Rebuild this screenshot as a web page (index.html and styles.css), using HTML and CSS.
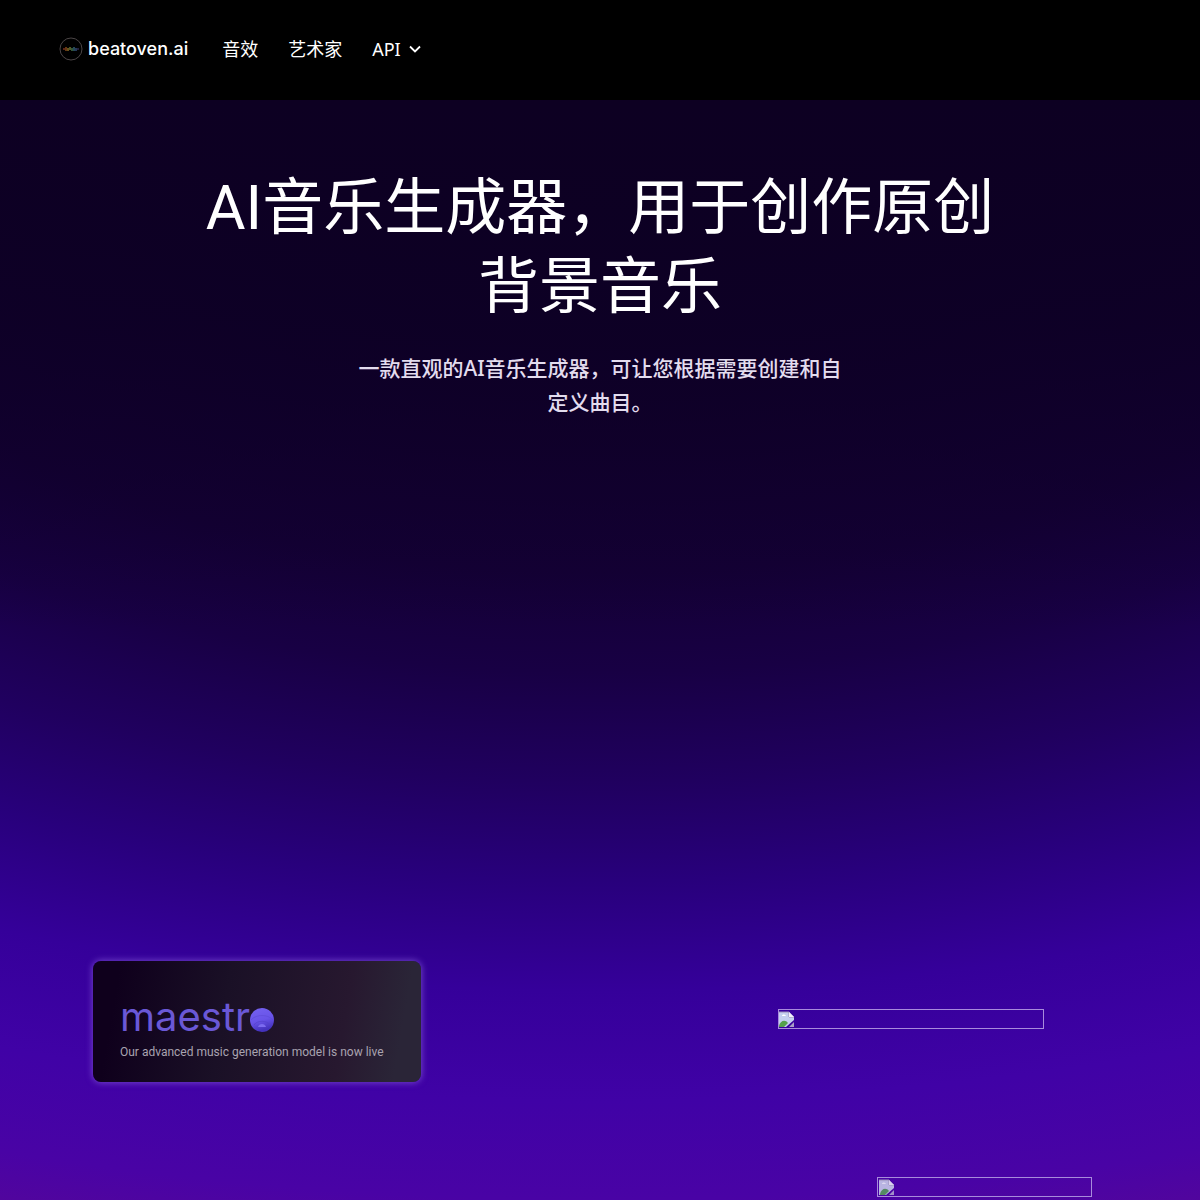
FILE: index.html
```html
<!DOCTYPE html>
<html lang="zh-CN">
<head>
    <meta charset="utf-8">
    <meta name="viewport" content="width=device-width, initial-scale=1">
    <title>beatoven.ai</title>
    <link rel="stylesheet" href="styles.css">
</head>
<body>
    <header class="navbar">
        <a class="logo" href="#">
            <svg class="logo-icon" width="24" height="24" viewBox="0 0 24 24" fill="none" aria-hidden="true">
                <circle cx="12" cy="12" r="11" stroke="#4b4546" stroke-width="1"/>
                <path d="M5 11v2" stroke="#b8442d"/>
                <path d="M7 10v4" stroke="#c96a25"/>
                <path d="M9 11v3" stroke="#c9a53a"/>
                <path d="M11 10v3" stroke="#9fb04e"/>
                <path d="M13 11v3" stroke="#63a86a"/>
                <path d="M15 10v4" stroke="#4a8fae"/>
                <path d="M17 11v3" stroke="#4b6fb0"/>
                <path d="M19 11v2" stroke="#443f78"/>
            </svg>
            <span class="logo-text">beatoven.ai</span>
        </a>
        <nav class="menu">
            <a class="menu-link" href="#">音效</a>
            <a class="menu-link" href="#">艺术家</a>
            <button class="menu-link menu-button" type="button">API
                <svg width="14" height="14" viewBox="0 0 14 14" fill="none" aria-hidden="true">
                    <path d="M2 4.5l5 5 5-5" stroke="#fff" stroke-width="1.8"/>
                </svg>
            </button>
        </nav>
    </header>

    <main class="hero">
        <h1 class="hero-title">AI音乐生成器，用于创作原创背景音乐</h1>
        <p class="hero-text">一款直观的AI音乐生成器，可让您根据需要创建和自定义曲目。</p>

        <section class="showcase">
            <a class="maestro-card" href="#">
                <span class="maestro-name">maestr<svg class="maestro-ball" width="24" height="24" viewBox="0 0 24 24" role="img" aria-label="o">
                        <defs>
                            <linearGradient id="ball" x1="0" y1="0" x2="0.3" y2="1">
                                <stop offset="0" stop-color="#7562f0"/>
                                <stop offset="0.6" stop-color="#6853e8"/>
                                <stop offset="1" stop-color="#4432bd"/>
                            </linearGradient>
                        </defs>
                        <circle cx="12" cy="12" r="12" fill="url(#ball)"/>
                        <path d="M1 12c5-6 17-6 22 0" stroke="#5a48d2" stroke-opacity="0.5" fill="none"/>
                        <path d="M4 17c3-5 13-5 16 0" stroke="#5442ca" stroke-opacity="0.7" fill="none"/>
                        <path d="M8 19c1-4 7-4 8 0z" fill="#7c6bf0"/>
                    </svg></span>
                <span class="maestro-text">Our advanced music generation model is now live</span>
            </a>
            <div class="pictures">
                <div class="picture picture-main">
                    <svg class="picture-icon" viewBox="0 0 16 16" aria-hidden="true">
                        <path d="M0 1h10l5 5v3L7 16H0z" fill="#c5cff0"/>
                        <path d="M0 1h10v5h5" stroke="#9b8fb8" fill="none"/>
                        <path d="M10 1l5 5h-5z" fill="#f2effa"/>
                        <path d="M3 5c0-2 3-2 4 0z" fill="#fff"/>
                        <path d="M0 15c1-5 6-7 9-3l-4 4H0z" fill="#55a04b"/>
                        <path d="M10 16l5-5v5z" fill="#a99dc6"/>
                    </svg>
                </div>
                <div class="picture picture-side">
                    <svg class="picture-icon" viewBox="0 0 16 16" aria-hidden="true">
                        <path d="M1 1h10l5 5v3L8 16H1z" fill="#b9b4e2"/>
                        <path d="M1 1h10v5h5" stroke="#9b8fb8" fill="none"/>
                        <path d="M11 1l5 5h-5z" fill="#d9d0ee"/>
                        <path d="M4 5c0-2 3-2 4 0z" fill="#ddd8f2"/>
                        <path d="M2 15c1-5 6-7 9-3l-4 4H2z" fill="#558a63"/>
                        <path d="M11 16l5-5v5z" fill="#a18fc8"/>
                    </svg>
                </div>
            </div>
        </section>
    </main>
</body>
</html>
```
FILE: styles.css
```css
* {
    box-sizing: border-box;
}

body {
    margin: 0;
    background-color: #000;
    color: #fff;
    font-family: "Noto Sans", "Noto Sans CJK SC", sans-serif;
}

a {
    color: inherit;
    text-decoration: none;
}

.navbar {
    display: flex;
    align-items: center;
    gap: 34px;
    height: 100px;
    padding: 0 59px;
    background-color: #000;
}

.logo {
    display: flex;
    align-items: center;
    gap: 5px;
    padding-bottom: 3px;
}

.logo-text {
    font-family: Inter, sans-serif;
    font-size: 18px;
    font-weight: 500;
    line-height: 24px;
}

.menu {
    display: flex;
    align-items: center;
    gap: 30px;
    padding-bottom: 2px;
}

.menu-link {
    font-size: 18px;
    line-height: 26px;
}

.menu-button {
    display: flex;
    align-items: center;
    gap: 7px;
    padding: 0;
    border: none;
    background: none;
    color: inherit;
    font-family: inherit;
    cursor: pointer;
}

.hero {
    min-height: calc(100vh - 100px);
    padding: 69px 24px 3px;
    overflow: hidden;
    text-align: center;
    /* dark fade on top, purple glow rising from the bottom corners */
    background:
        linear-gradient(#0d0022 0%, rgba(13, 0, 36, 0.8) 20%, rgba(18, 0, 46, 0) 48%),
        radial-gradient(ellipse 170% 100% at 50% 0,
            #0c0020 0%,
            #0d0026 15%,
            #11002e 28%,
            #140036 43%,
            #180044 52%,
            #20005f 62%,
            #28007c 71%,
            #35009a 81%,
            #4002a6 91%,
            #4903a5 100%,
            #54069a 106%);
}

.hero-title {
    max-width: 800px;
    margin: 0 auto;
    font-family: Roboto, "Noto Sans CJK SC", sans-serif;
    font-size: 61px;
    font-weight: 400;
    line-height: 79px;
}

.hero-text {
    max-width: 490px;
    margin: 24px auto 0;
    color: #e3dcee;
    font-size: 21px;
    font-weight: 500;
    line-height: 34px;
}

.showcase {
    display: grid;
    grid-template-columns: 1fr 1fr;
    align-items: start;
    max-width: 1014px;
    margin: 542px auto 0;
    text-align: left;
}

.maestro-card {
    display: flex;
    flex-direction: column;
    gap: 6px;
    width: 328px;
    padding: 36px 27px 21px;
    border-radius: 8px;
    background: linear-gradient(100deg, #0f001c 8%, #1a1026 40%, #27182f 75%, #2a2537 92%);
    box-shadow: 0 0 6px 1px rgba(145, 105, 225, 0.6);
}

.maestro-name {
    display: flex;
    align-items: center;
    color: #6a58d6;
    font-family: Inter, sans-serif;
    font-size: 40px;
    font-weight: 400;
    line-height: 40px;
}

.maestro-ball {
    margin-top: 6px;
}

.maestro-text {
    color: #a9a3b0;
    font-family: Roboto, sans-serif;
    font-size: 12px;
    line-height: 18px;
    white-space: nowrap;
}

.pictures {
    display: flex;
    flex-direction: column;
    gap: 148px;
    padding: 48px 0 0 178px;
}

.picture {
    display: flex;
    height: 20px;
    border: 1px solid #a88bdc;
}

.picture-main {
    width: 266px;
}

.picture-side {
    width: 215px;
    margin-left: 99px;
}

.picture-icon {
    width: 16px;
    height: 16px;
    margin-top: 1px;
}
```
